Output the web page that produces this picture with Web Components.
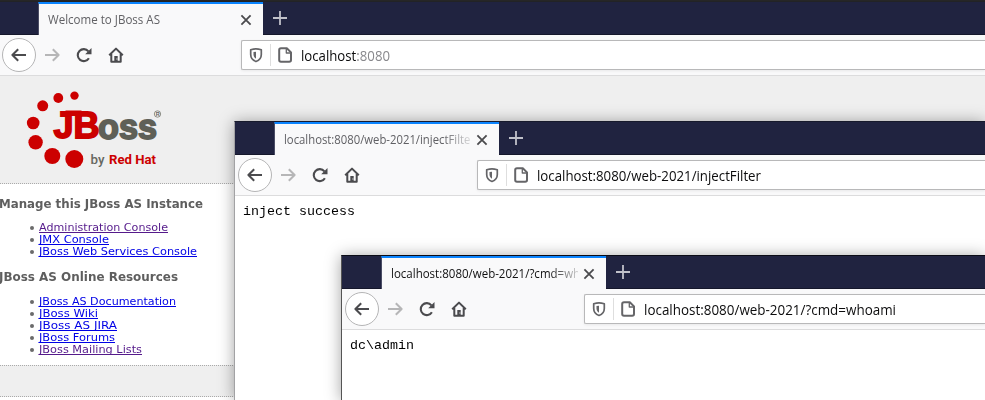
<!DOCTYPE html>
<html lang="en">
<head>
<meta charset="utf-8">
<title>Browser windows</title>
<style>
html,body{margin:0;height:100%;overflow:hidden;background:#fff}
body{position:relative;font-family:"Open Sans","Noto Sans",sans-serif}
browser-window{position:absolute;bottom:0;right:0}
.w1{left:-1px;top:1px}
.w2{left:234px;top:121px}
.w3{left:341px;top:255px}
.out{font:13px/15px "Liberation Mono",monospace;color:#000;padding:8px 0 0 8px}
</style>
</head>
<body>
<desktop-edge></desktop-edge>
<browser-window class="w1" first tab="Welcome to JBoss AS" tabw="112" host="localhost" rest=":8080" urlw="89"><jboss-page></jboss-page></browser-window>
<browser-window class="w2" tab="localhost:8080/web-2021/injectFilter" tabw="191" host="localhost:8080/web-2021/injectFilter" urlw="224"><div class="out"><fit-text width="112">inject success</fit-text></div></browser-window>
<browser-window class="w3" active tab="localhost:8080/web-2021/?cmd=whoami" tabw="216" host="localhost:8080/web-2021/?cmd=whoami" urlw="252"><div class="out"><fit-text width="64">dc\admin</fit-text></div></browser-window>
<script>
/* Text stretched horizontally to a given width. */
class FitText extends HTMLElement{
  connectedCallback(){
    if(!this.shadowRoot){
      this.attachShadow({mode:'open'}).innerHTML=`<style>:host{display:inline-block;white-space:nowrap;vertical-align:top}span{display:inline-block;transform-origin:0 50%;white-space:pre}</style><span><slot></slot></span>`;
    }
    requestAnimationFrame(()=>this.fit());
    this.fit();
  }
  fit(){
    const s=this.shadowRoot.querySelector('span'),w=+this.getAttribute('width');
    if(s.offsetWidth){
      s.style.transform='none';
      const n=s.getBoundingClientRect().width;
      s.style.transform=`scaleX(${w/n})`;
      this.style.width=w+'px';
    }
  }
}

class DesktopEdge extends HTMLElement{
  constructor(){super();this.attachShadow({mode:'open'}).innerHTML=`<style>:host{display:block;height:2px;background:#262627}</style>`}
}

class NavIcon extends HTMLElement{
  connectedCallback(){
    const P={
      back:'<path d="M15 8H1.6M7.2 2.2 1.4 8l5.8 5.8" stroke-width="2"/>',
      forward:'<path d="M1 8h13.4M8.8 2.2 14.6 8l-5.8 5.8" stroke-width="2"/>',
      reload:'<path d="M12.9 11.2A6 6 0 1 1 12.4 4.3" stroke-width="2.1"/><path d="M15.5 1v6.3H9.2z" fill="currentColor" stroke="none"/>',
      home:'<path d="M1.2 8.3 8 1.6l6.8 6.7M3.3 7v7.8h9.4V7" stroke-width="2"/><path d="M6.3 9h3.4v6H6.3z" fill="currentColor" stroke="none"/><path d="M8.4 11.5h1v1h-1z" fill="#f9f9fa" stroke="none"/>',
      shield:'<path d="M8 1.8c2 0 3.800.5 5.300 1v4.700c0 3.300-2 5.800-5.300 7-3.300-1.200-5.300-3.700-5.300-7V2.800C4.200 2.300 6 1.800 8 1.800z" stroke-width="1.700"/><path d="M8 4.700v7c-1.500-.8-2.500-2.400-2.500-4.400V5.100z" fill="currentColor" stroke="none"/>',
      page:'<path d="M4 1.200H9.800L14 5.400V13q0 1.800-1.800 1.800H4Q2.200 14.800 2.200 13V3Q2.200 1.200 4 1.200z" stroke-width="2"/><path d="M9.300 2v4H13.500" stroke-width="1.300"/>',
      close:'<path d="M3.400 3.400l9.200 9.200M12.600 3.400l-9.200 9.200" stroke-width="1.800"/>',
      plus:'<path d="M8 1v14M1 8h14" stroke-width="1.800"/>'};
    this.attachShadow({mode:'open'}).innerHTML=`<style>:host{display:block;flex:none;width:16px;height:16px}svg{display:block;width:100%;height:100%}</style><svg viewBox="0 0 16 16" fill="none" stroke="currentColor" stroke-linecap="butt" stroke-linejoin="round">${P[this.getAttribute('name')]}</svg>`;
  }
}

class BrowserWindow extends HTMLElement{
  connectedCallback(){
    const a=n=>this.getAttribute(n)||'';
    this.attachShadow({mode:'open'}).innerHTML=`<style>
:host{display:flex;flex-direction:column;box-sizing:border-box;border:1px solid #a2a2a4;border-top-color:#171a2c;border-right:0!important;border-bottom:0!important;background:#fff;box-shadow:0 1px 15px rgba(0,0,0,.36)}
:host([first]){border-left:0;border-top-color:#222326;box-shadow:none}
:host([active]){border-color:#555;border-top-color:#0b0c16}
.strip{display:flex;height:33px;flex:none;padding-left:39px;background:#202340;box-shadow:inset 0 -1px #15172b}
.tab{box-sizing:border-box;display:flex;align-items:center;width:225px;border-left:1px solid #4b4d65;background:#f9f9fa;border-top:2px solid #0a84ff;padding:0 8px 0 9px;color:#606064}
:host([active]) .tab{color:#111}
.name{flex:none;width:187px;height:18px;font-size:12px;line-height:18px;overflow:hidden}
:host(:not([first])) .name{-webkit-mask-image:linear-gradient(90deg,#000 158px,transparent 193px);mask-image:linear-gradient(90deg,#000 158px,transparent 193px)}
.x{color:#4a4a4d;margin:0 0 0 3px}
.plus{color:#c0c1c9;margin:8px 0 0 9px;width:16px;height:16px}
.bar{display:flex;align-items:center;height:41px;flex:none;box-sizing:border-box;background:#f9f9fa;border-bottom:1px solid #dcdcdd;color:#4b4b4e;padding-left:3px}
.back{box-sizing:border-box;width:34px;height:34px;border:1px solid #b5b5b6;border-radius:50%;background:#fff;display:grid;place-items:center;margin-right:8px}
.fwd{color:#b6b6b7;margin-right:16px}.reload{margin-right:16px}
.url{box-sizing:border-box;display:flex;align-items:center;flex:1;height:30px;margin-left:117px;border:1px solid #b8b8b9;border-right:0;border-radius:2px 0 0 2px;background:#fff;padding-left:6px;color:#656568;box-shadow:0 1px 3px rgba(0,0,0,.07)}
.sep{width:1px;height:22px;background:#dedede;margin:0 6px}
.text{font-size:14px;line-height:20px;color:#0c0c0d;margin-left:8px;padding-top:2px}
.rest{color:#88888c}
.page{flex:1;min-height:0;overflow:hidden}
</style>
<div class="strip"><div class="tab"><div class="name"><fit-text width="${a('tabw')}">${a('tab')}</fit-text></div><nav-icon class="x" name="close"></nav-icon></div><nav-icon class="plus" name="plus"></nav-icon></div>
<div class="bar"><div class="back"><nav-icon name="back"></nav-icon></div><nav-icon class="fwd" name="forward"></nav-icon><nav-icon class="reload" name="reload"></nav-icon><nav-icon name="home"></nav-icon>
<div class="url"><nav-icon name="shield"></nav-icon><i class="sep"></i><nav-icon name="page"></nav-icon><div class="text"><fit-text width="${a('urlw')}">${a('host')}<span class="rest">${a('rest')}</span></fit-text></div></div></div>
<div class="page"><slot></slot></div>`;
  }
}

class JbossLogo extends HTMLElement{
  constructor(){super();this.attachShadow({mode:'open'}).innerHTML=`<style>:host{display:block;width:170px;height:100px}svg{display:block}</style>
<svg width="170" height="100" viewBox="0 80 170 100">
<g fill="#c00"><circle cx="74.500" cy="95.600" r="4.200"/><circle cx="58.300" cy="98" r="4.900"/><circle cx="42.700" cy="105.800" r="5.500"/><circle cx="33.200" cy="123" r="6.300"/><circle cx="35.600" cy="142.300" r="7.200"/><circle cx="52.300" cy="156" r="8"/><circle cx="74.300" cy="159" r="9"/></g>
<g font-family="Liberation Sans,sans-serif" font-weight="700" stroke-width="1.800" stroke-linejoin="miter">
<text x="98" y="138.500" font-size="35" fill="#5f6057" stroke="#5f6057" textLength="59" lengthAdjust="spacingAndGlyphs">oss</text>
<text x="53.500" y="138" font-size="37.500" fill="#c00" stroke="#c00" textLength="46" lengthAdjust="spacingAndGlyphs">JB</text>
<path d="M65.500 110.500h16v5.500h-16z" fill="#c00"/></g>
<circle cx="157.500" cy="114" r="3.200" fill="none" stroke="#777870" stroke-width=".8"/><text x="155.800" y="116.200" font-family="Liberation Sans,sans-serif" font-size="5.500" font-weight="700" fill="#666">R</text>
<g font-family="Roboto,sans-serif" font-size="13" font-weight="500"><text x="90.500" y="163.800" fill="#666760" textLength="14" lengthAdjust="spacingAndGlyphs">by</text><text x="109" y="163.800" fill="#c00" font-weight="700" textLength="47" lengthAdjust="spacingAndGlyphs">Red Hat</text></g>
</svg>`}
}

class LinkList extends HTMLElement{
  constructor(){super();this.attachShadow({mode:'open'}).innerHTML=`<style>
:host{display:block}
h3{margin:0;font:bold 12px/16px "DejaVu Sans",sans-serif;color:#5e5e5e}
</style><h3><slot name="title"></slot></h3><slot></slot>`}
}

class LinkItem extends HTMLElement{
  connectedCallback(){
    this.attachShadow({mode:'open'}).innerHTML=`<style>
:host{display:flex;align-items:flex-start;height:12px;padding-left:30px;font:10px/12px "DejaVu Sans",sans-serif}
i{width:4px;height:4px;border-radius:50%;background:#6b6b6b;margin:4px 5px 0 0}
a{color:#0000e6;height:10px;line-height:11px;border-bottom:1px solid}
:host([visited]) a{color:#551a8b}
</style><i></i><a><fit-text width="${this.getAttribute('w')}"><slot></slot></fit-text></a>`;
  }
}

class JbossPage extends HTMLElement{
  constructor(){super();this.attachShadow({mode:'open'}).innerHTML=`<style>
:host{display:block}
header{height:107px;background:#efefef;border-bottom:1px dotted #aaa;overflow:hidden;padding-left:1px}
jboss-logo{margin:4px 0 0}
main{height:181px;box-sizing:border-box;padding:12px 0 0 1px}
fit-text[slot]{margin-left:-1px}
.second{margin-top:11px}
.gap{height:10px}.gap2{height:11px}
footer{height:30px;background:#efefef;border:1px dotted #aaa;border-width:1px 0}
</style>
<header><jboss-logo></jboss-logo></header>
<main>
<link-list><fit-text slot="title" width="204">Manage this JBoss AS Instance</fit-text><div class="gap"></div>
<link-item w="129" visited>Administration Console</link-item><link-item w="70">JMX Console</link-item><link-item w="158">JBoss Web Services Console</link-item></link-list>
<link-list class="second"><fit-text slot="title" width="179">JBoss AS Online Resources</fit-text><div class="gap2"></div>
<link-item w="137">JBoss AS Documentation</link-item><link-item w="59">JBoss Wiki</link-item><link-item w="78">JBoss AS JIRA</link-item><link-item w="76">JBoss Forums</link-item><link-item w="103" visited>JBoss Mailing Lists</link-item></link-list>
</main><footer></footer>`}
}
customElements.define('fit-text',FitText);
customElements.define('desktop-edge',DesktopEdge);
customElements.define('nav-icon',NavIcon);
customElements.define('jboss-logo',JbossLogo);
customElements.define('link-item',LinkItem);
customElements.define('link-list',LinkList);
customElements.define('jboss-page',JbossPage);
customElements.define('browser-window',BrowserWindow);
</script>
</body>
</html>
